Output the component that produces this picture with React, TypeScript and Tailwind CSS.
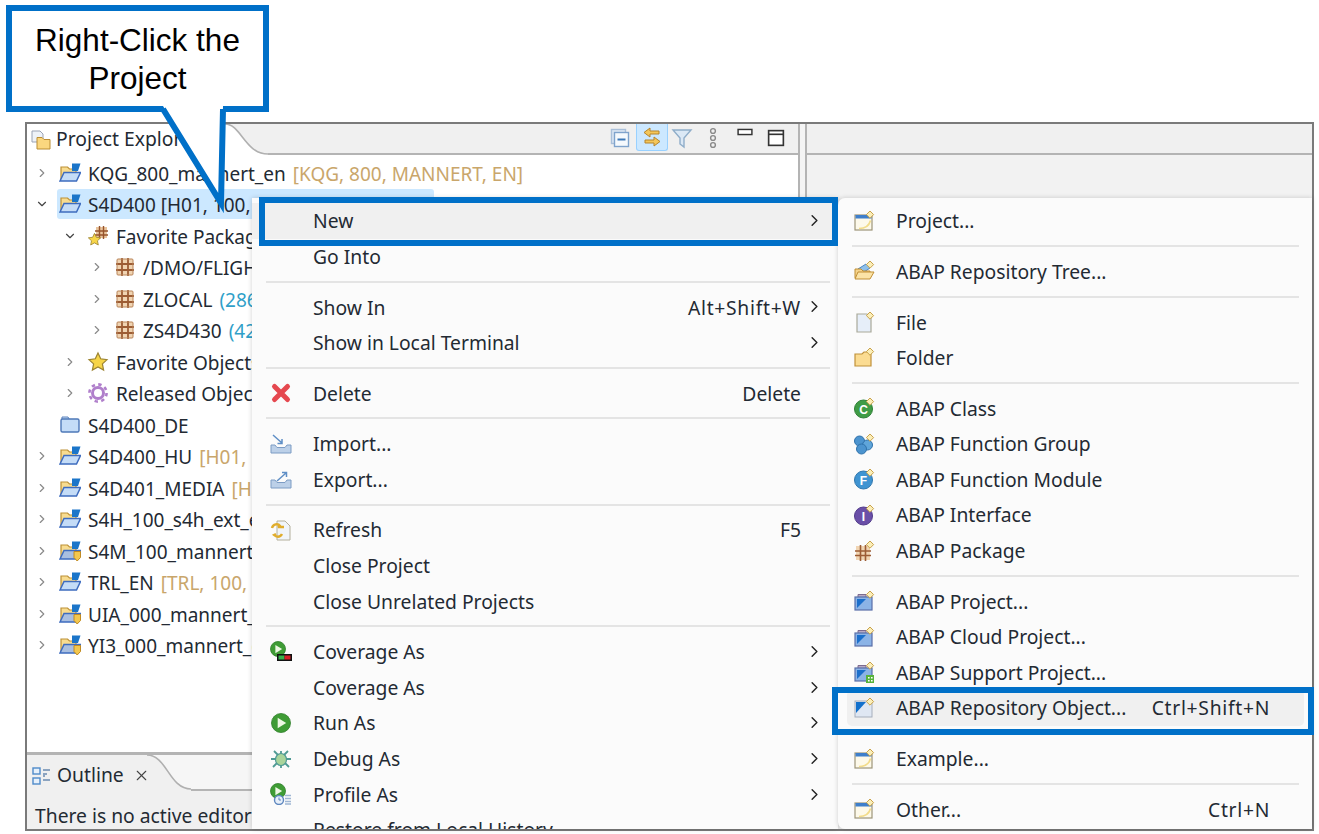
import type { ReactNode } from "react";
import { ChevronDown, ChevronRight, X } from "lucide-react";

function Ico({ children, size = 22 }: { children: ReactNode; size?: number }) {
  return (
    <svg width={size} height={size} viewBox="0 0 22 22" className="shrink-0">
      {children}
    </svg>
  );
}

/* small yellow "new" diamond used by the wizard icons */
const Spark = () => (
  <path d="M17 1l3.6 3.6L17 8.2l-3.6-3.6z" fill="#fbeeb8" stroke="#c9a24a" strokeWidth="1" />
);

const ProjectIcon = ({ locked }: { locked?: boolean }) => (
  <Ico>
    <path d="M2 5h6.5l2 2H17v10H2z" fill="#f8dc90" stroke="#bd9136" strokeWidth="1.2" />
    <path d="M13 1.5h8.5L19 9h-6z" fill="#1b75c9" />
    <path d="M1 19 5 10.5h16.5L17.5 19z" fill={locked ? "#a9bfe0" : "#c4dcf7"} stroke="#3e6cbf" strokeWidth="1.5" />
    {locked && <path d="M15 11.5h6.5v6L18.2 21 15 17.5z" fill="#f3c74e" stroke="#c08a22" />}
  </Ico>
);

const PackageIcon = ({ size = 22 }: { size?: number }) => (
  <Ico size={size}>
    <rect x="3" y="3" width="16" height="16" rx="1" fill="#f0d4b2" />
    <path d="M2 8h18M2 14h18M8 2v18M14 2v18" stroke="#9c5c34" strokeWidth="1.8" fill="none" />
    <rect x="3" y="3" width="16" height="16" rx="1" fill="none" stroke="#b98458" strokeWidth="1" />
  </Ico>
);

const Star = ({ x = 0, y = 0, s = 1 }: { x?: number; y?: number; s?: number }) => (
  <path
    transform={`translate(${x} ${y}) scale(${s})`}
    d="M11 2l2.7 5.8 6.3.8-4.6 4.3 1.2 6.2L11 16l-5.6 3.1 1.2-6.2L2 8.6l6.3-.8z"
    fill="#f7d548"
    stroke="#9c8432"
    strokeWidth="1.2"
  />
);

const FavPackageIcon = () => (
  <Ico>
    <rect x="9" y="2" width="11" height="11" fill="#e9c49c" />
    <path d="M8 6h13M8 10h13M12.5 1v13M16.5 1v13" stroke="#96532c" strokeWidth="1.4" fill="none" />
    <Star x={0} y={7} s={0.68} />
  </Ico>
);

const GearIcon = () => (
  <Ico>
    <circle cx="11" cy="11" r="5.5" fill="none" stroke="#b07fcb" strokeWidth="3" />
    <circle cx="11" cy="11" r="8.6" fill="none" stroke="#b07fcb" strokeWidth="2.6" strokeDasharray="3.4 3.35" />
  </Ico>
);

const ClosedProjectIcon = () => (
  <Ico>
    <path d="M3 5.5V3h6l1.5 2.5z" fill="#c9dcf4" stroke="#5c83bd" />
    <rect x="2" y="5" width="18" height="13" rx="1.5" fill="#c4dcf7" stroke="#4e78b8" strokeWidth="1.4" />
  </Ico>
);

const WindowNew = () => (
  <Ico>
    <rect x="2" y="5" width="17" height="15" fill="#fdf9ea" stroke="#9d9478" strokeWidth="1.2" />
    <rect x="2.5" y="5" width="16" height="3.5" fill="#3f7fcb" />
    <path d="M6 18.5c6 0 10-2 11.5-8" fill="none" stroke="#f2dc8a" strokeWidth="1.6" />
    <Spark />
  </Ico>
);

const RepoTreeNew = () => (
  <Ico>
    <path d="M5 9l8-5 4 4-6 4z" fill="#8fc0ea" stroke="#4d87c2" />
    <path d="M2 18V9h6l2 2h7v7z" fill="#f6d48b" stroke="#bd8c33" />
    <path d="M2 19l3-7h16l-4 7z" fill="#fbe3a6" stroke="#c18f35" />
    <Spark />
  </Ico>
);

const FileNew = () => (
  <Ico>
    <path d="M4 3h10l4 4v14H4z" fill="#e6eef9" stroke="#a9a99a" strokeWidth="1.2" />
    <Spark />
  </Ico>
);

const FolderNew = () => (
  <Ico>
    <path d="M2 19V7h7l2-2h7v14z" fill="#fbdc92" stroke="#c0913a" strokeWidth="1.2" />
    <Spark />
  </Ico>
);

const LetterBall = ({ fill, ring, letter }: { fill: string; ring: string; letter: string }) => (
  <Ico>
    <circle cx="10.5" cy="12" r="9" fill={fill} stroke={ring} strokeWidth="1" />
    <text x="10.5" y="16.5" textAnchor="middle" fontSize="12" fontWeight="700" fill="#fff" fontFamily="Liberation Sans, sans-serif">
      {letter}
    </text>
    <Spark />
  </Ico>
);

const GroupNew = () => (
  <Ico>
    <circle cx="6.5" cy="8" r="5" fill="#4c94cf" stroke="#2f72ab" />
    <circle cx="14.5" cy="12" r="5" fill="#5fa5da" stroke="#2f72ab" />
    <circle cx="8.5" cy="16" r="5" fill="#4c94cf" stroke="#2f72ab" />
    <Spark />
  </Ico>
);

const PackageNew = () => (
  <Ico>
    <rect x="3" y="6" width="14" height="14" fill="#f0d4b2" />
    <path d="M2 11h16M2 15.5h16M7.5 5v16M12.5 5v16" stroke="#9c5c34" strokeWidth="1.6" fill="none" />
    <Spark />
  </Ico>
);

const AbapProjectNew = ({ support }: { support?: boolean }) => (
  <Ico>
    <path d="M5 7V4.5h8V7" fill="#b7a9c4" stroke="#7c6b8f" />
    <rect x="2" y="7" width="17" height="13" fill="#8bb3e6" stroke="#5a6fa8" strokeWidth="1.2" />
    <path d="M4 9h9l-9 9z" fill="#1b6fcc" />
    <Spark />
    {support && <path d="M13 14h8v8h-8z" fill="#57b33c" />}
    {support && <path d="M15 16h1.6v1.6H15zM18 16h1.6v1.6H18zM15 19h1.6v1.6H15zM18 19h1.6v1.6H18z" fill="#fff" />}
  </Ico>
);

const RepoObjectNew = () => (
  <Ico>
    <rect x="2" y="4" width="17" height="16" fill="#dfe7f3" stroke="#a6aebb" />
    <path d="M3 5h10L3 16z" fill="#1270cc" />
    <Spark />
  </Ico>
);

const DeleteIcon = () => (
  <Ico>
    <path d="M4.5 4.5l13 13M17.5 4.5l-13 13" stroke="#e5484f" strokeWidth="5" strokeLinecap="round" />
  </Ico>
);

const TransferIcon = ({ out }: { out?: boolean }) => (
  <Ico>
    <path d="M1 12h4l2 2.5h8l2-2.5h4v8H1z" fill="#bcd0e8" stroke="#7d9cc4" />
    {out ? (
      <path d="M7 13l9-8M12 4.5h4.5V9" fill="none" stroke="#5f8fc6" strokeWidth="1.5" />
    ) : (
      <path d="M3 2l9 8M12 6v4.5H7.5" fill="none" stroke="#5f8fc6" strokeWidth="1.5" />
    )}
  </Ico>
);

const RefreshIcon = () => (
  <Ico>
    <path d="M7 2h8l5 5v14H7z" fill="#f1f5fa" stroke="#b4b09c" />
    <path d="M2 9c1-4 6-5 8-2l-2 1h6" fill="none" stroke="#e0ad2d" strokeWidth="2.4" />
    <path d="M12 15c-2 4-6 3-8 1l2-1" fill="none" stroke="#e0ad2d" strokeWidth="2.4" />
  </Ico>
);

const PlayBall = ({ cx = 11, cy = 11, r = 9.5 }: { cx?: number; cy?: number; r?: number }) => (
  <>
    <circle cx={cx} cy={cy} r={r} fill="#3f9c35" stroke="#2f7f2a" strokeWidth="0.8" />
    <path
      d={`M${cx - r * 0.35} ${cy - r * 0.55}L${cx + r * 0.55} ${cy}L${cx - r * 0.35} ${cy + r * 0.55}z`}
      fill="#eef8e4"
    />
  </>
);

const CoverageIcon = () => (
  <Ico>
    <PlayBall cx={8} cy={8} r={7.5} />
    <rect x="7" y="13" width="15" height="7" fill="#111" />
    <rect x="8.5" y="14.5" width="6" height="4" fill="#37b34a" />
    <rect x="14.5" y="14.5" width="6" height="4" fill="#d61f26" />
  </Ico>
);

const BugIcon = () => (
  <Ico>
    <path d="M11 3v3M4 3l4 4M18 3l-4 4M1 11h5M16 11h5M3 19l4-4M19 19l-4-4M11 17v3" stroke="#4f9a94" strokeWidth="1.8" />
    <ellipse cx="11" cy="11.5" rx="5.5" ry="6" fill="#a9d49b" stroke="#4f9a94" strokeWidth="1.2" />
  </Ico>
);

const ProfileIcon = () => (
  <Ico>
    <PlayBall cx={8} cy={8} r={7.5} />
    <circle cx="9" cy="17" r="4.5" fill="#e8f0fa" stroke="#5e87bf" strokeWidth="1.4" />
    <path d="M9 14.5V17h2" stroke="#5e87bf" fill="none" />
    <path d="M15 12.5h6M15 15.5h6M15 18.5h6M15 21h6" stroke="#9fb6d4" strokeWidth="1.4" />
  </Ico>
);

const ExplorerIcon = () => (
  <Ico>
    <path d="M2 2h8l3 3v8H2z" fill="#eef2f8" stroke="#9aa3b5" />
    <path d="M7 11V8.5h5l2 2h6V20H7z" fill="#fbd77f" stroke="#bb8d33" />
  </Ico>
);

const OutlineIcon = () => (
  <Ico>
    <rect x="2" y="3" width="7" height="6" fill="#e6f0fb" stroke="#4f8ac9" strokeWidth="1.4" />
    <rect x="2" y="13" width="7" height="6" fill="#e6f0fb" stroke="#4f8ac9" strokeWidth="1.4" />
    <path d="M12 5h7M12 9h4M12 15h7M12 11h2" stroke="#6b8bb0" strokeWidth="1.4" />
  </Ico>
);

const ToolbarIcons = () => (
  <div className="ml-auto flex items-start pr-[7px]">
    <div className="flex h-[27px] w-[32px] items-center justify-center">
      <Ico>
        <rect x="2.5" y="2.5" width="14" height="14" fill="#dbe6f3" stroke="#a9bfd9" strokeWidth="1.4" />
        <rect x="5.5" y="5.5" width="14" height="14" fill="#f5f9fd" stroke="#7fa3cc" strokeWidth="1.4" />
        <path d="M8.5 12.5h8" stroke="#3c78b8" strokeWidth="2" />
      </Ico>
    </div>
    <div className="flex h-[27px] w-[32px] items-center justify-center rounded-b-[3px] border border-t-0 border-[#99d1ff] bg-[#cce8ff]">
      <Ico>
        <path d="M9 2L3 6.5 9 11V8h9V5H9z" fill="#f4c659" stroke="#b5842c" />
        <path d="M13 11l6 4.5-6 4.5v-3H4v-3h9z" fill="#f4c659" stroke="#b5842c" />
      </Ico>
    </div>
    <div className="flex h-[27px] w-[28px] items-center justify-center">
      <Ico>
        <path d="M2 3h18l-7 8v9l-4-3v-6z" fill="#dbe8f5" stroke="#8fadc9" strokeWidth="1.4" />
      </Ico>
    </div>
    <div className="flex h-[27px] w-[33px] items-center justify-center">
      <Ico>
        <circle cx="11" cy="4" r="2.4" fill="none" stroke="#8a8a8a" strokeWidth="1.4" />
        <circle cx="11" cy="11" r="2.4" fill="none" stroke="#8a8a8a" strokeWidth="1.4" />
        <circle cx="11" cy="18" r="2.4" fill="none" stroke="#8a8a8a" strokeWidth="1.4" />
      </Ico>
    </div>
    <div className="flex h-[27px] w-[31px] items-start justify-center pt-[4px]">
      <Ico size={16}>
        <rect x="1.5" y="2" width="19" height="7" fill="#fff" stroke="#333" strokeWidth="2" />
      </Ico>
    </div>
    <div className="flex h-[27px] w-[31px] items-center justify-center">
      <Ico size={18}>
        <rect x="2" y="2" width="18" height="18" fill="#fff" stroke="#333" strokeWidth="2" />
        <path d="M2 6.5h18" stroke="#333" strokeWidth="2" />
      </Ico>
    </div>
  </div>
);

type TreeRow = {
  depth: 0 | 1 | 2;
  chevron?: "right" | "down";
  icon: ReactNode;
  name: string;
  deco?: string;
  decoColor?: string;
  selected?: boolean;
};

const depthPad = ["pl-[8px]", "pl-[36px]", "pl-[63px]"];
const tan = "text-[#c9a66b]";
const teal = "text-[#2f9fc9]";

const treeRows: TreeRow[] = [
  { depth: 0, chevron: "right", icon: <ProjectIcon />, name: "KQG_800_mannert_en", deco: "[KQG, 800, MANNERT, EN]", decoColor: tan },
  { depth: 0, chevron: "down", icon: <ProjectIcon />, name: "S4D400 [H01, 100, CB9980000010, EN]", selected: true },
  { depth: 1, chevron: "down", icon: <FavPackageIcon />, name: "Favorite Packages" },
  { depth: 2, chevron: "right", icon: <PackageIcon />, name: "/DMO/FLIGHT" },
  { depth: 2, chevron: "right", icon: <PackageIcon />, name: "ZLOCAL", deco: "(286)", decoColor: teal },
  { depth: 2, chevron: "right", icon: <PackageIcon />, name: "ZS4D430", deco: "(42)", decoColor: teal },
  { depth: 1, chevron: "right", icon: <Ico><Star /></Ico>, name: "Favorite Objects" },
  { depth: 1, chevron: "right", icon: <GearIcon />, name: "Released Objects" },
  { depth: 0, icon: <ClosedProjectIcon />, name: "S4D400_DE" },
  { depth: 0, chevron: "right", icon: <ProjectIcon />, name: "S4D400_HU", deco: "[H01, 100, EN]", decoColor: tan },
  { depth: 0, chevron: "right", icon: <ProjectIcon />, name: "S4D401_MEDIA", deco: "[H01, 100, EN]", decoColor: tan },
  { depth: 0, chevron: "right", icon: <ProjectIcon />, name: "S4H_100_s4h_ext_en", deco: "[S4H, 100]", decoColor: tan },
  { depth: 0, chevron: "right", icon: <ProjectIcon locked />, name: "S4M_100_mannert_en", deco: "[S4M, 100]", decoColor: tan },
  { depth: 0, chevron: "right", icon: <ProjectIcon />, name: "TRL_EN", deco: "[TRL, 100, EN]", decoColor: tan },
  { depth: 0, chevron: "right", icon: <ProjectIcon locked />, name: "UIA_000_mannert_en", deco: "[UIA, 000]", decoColor: tan },
  { depth: 0, chevron: "right", icon: <ProjectIcon locked />, name: "YI3_000_mannert_en", deco: "[YI3, 000]", decoColor: tan },
];

type MenuRow =
  | "sep"
  | { label: string; icon?: ReactNode; shortcut?: string; chord?: boolean; arrow?: boolean; active?: boolean };

const contextMenu: MenuRow[] = [
  { label: "New", arrow: true, active: true },
  { label: "Go Into" },
  "sep",
  { label: "Show In", shortcut: "Alt+Shift+W", chord: true, arrow: true },
  { label: "Show in Local Terminal", arrow: true },
  "sep",
  { label: "Delete", icon: <DeleteIcon />, shortcut: "Delete" },
  "sep",
  { label: "Import...", icon: <TransferIcon /> },
  { label: "Export...", icon: <TransferIcon out /> },
  "sep",
  { label: "Refresh", icon: <RefreshIcon />, shortcut: "F5" },
  { label: "Close Project" },
  { label: "Close Unrelated Projects" },
  "sep",
  { label: "Coverage As", icon: <CoverageIcon />, arrow: true },
  { label: "Coverage As", arrow: true },
  { label: "Run As", icon: <Ico><PlayBall /></Ico>, arrow: true },
  { label: "Debug As", icon: <BugIcon />, arrow: true },
  { label: "Profile As", icon: <ProfileIcon />, arrow: true },
  { label: "Restore from Local History...", arrow: false },
];

const newMenu: MenuRow[] = [
  { label: "Project...", icon: <WindowNew /> },
  "sep",
  { label: "ABAP Repository Tree...", icon: <RepoTreeNew /> },
  "sep",
  { label: "File", icon: <FileNew /> },
  { label: "Folder", icon: <FolderNew /> },
  "sep",
  { label: "ABAP Class", icon: <LetterBall fill="#3f9c45" ring="#2d7f35" letter="C" /> },
  { label: "ABAP Function Group", icon: <GroupNew /> },
  { label: "ABAP Function Module", icon: <LetterBall fill="#3f94d2" ring="#2f76ad" letter="F" /> },
  { label: "ABAP Interface", icon: <LetterBall fill="#6a4fa8" ring="#513a8a" letter="I" /> },
  { label: "ABAP Package", icon: <PackageNew /> },
  "sep",
  { label: "ABAP Project...", icon: <AbapProjectNew /> },
  { label: "ABAP Cloud Project...", icon: <AbapProjectNew /> },
  { label: "ABAP Support Project...", icon: <AbapProjectNew support /> },
  { label: "ABAP Repository Object...", icon: <RepoObjectNew />, shortcut: "Ctrl+Shift+N", chord: true, active: true },
  "sep",
  { label: "Example...", icon: <WindowNew /> },
  "sep",
  { label: "Other...", icon: <WindowNew />, shortcut: "Ctrl+N", chord: true },
];

function Menu({ rows }: { rows: MenuRow[] }) {
  return (
    <>
      {rows.map((row, i) =>
        row === "sep" ? (
          <div key={i} className="flex h-[15px] items-center pl-[14px] pr-[8px]">
            <div className="h-[2px] w-full bg-[#e4e4e4]" />
          </div>
        ) : (
          <div
            key={i}
            className={`flex h-[35.6px] shrink-0 items-center ${row.active ? "bg-[#f0f0f0]" : ""}`}
          >
            <div className="ml-[16px] flex w-[26px] justify-center">{row.icon}</div>
            <span className="ml-[19px] pt-[2px]">{row.label}</span>
            {row.shortcut && (
              <span className={`ml-auto pt-[2px] ${row.chord ? "tracking-[0.7px]" : ""}`}>{row.shortcut}</span>
            )}
            <div className={`${row.shortcut ? "" : "ml-auto"} w-[37px] pl-[4px]`}>
              {row.arrow && <ChevronRight size={19} strokeWidth={1.8} color="#222" />}
            </div>
          </div>
        ),
      )}
    </>
  );
}

function SubMenu({ rows }: { rows: MenuRow[] }) {
  return (
    <>
      {rows.map((row, i) =>
        row === "sep" ? (
          <div key={i} className="flex h-[15px] items-center pl-[14px] pr-[13px]">
            <div className="h-[2px] w-full bg-[#e4e4e4]" />
          </div>
        ) : (
          <div key={i} className="flex h-[35.6px] shrink-0 items-center pl-[9px] pr-[8px]">
            <div
              className={`flex h-full w-full items-center rounded-[5px] ${row.active ? "bg-[#f0f0f0]" : ""}`}
            >
              <div className="ml-[4px] flex w-[26px] justify-center">{row.icon}</div>
              <span className="ml-[19px] pt-[2px]">{row.label}</span>
              {row.shortcut && <span className="ml-auto pr-[34px] pt-[2px] tracking-[0.7px]">{row.shortcut}</span>}
            </div>
          </div>
        ),
      )}
    </>
  );
}

export default function App() {
  return (
    <div
      className="relative h-[834px] w-[1319px] overflow-hidden bg-white pl-[25px] pt-[122px] text-[19.3px] text-[#232a33]"
      style={{ fontFamily: '"Noto Sans", "Open Sans", sans-serif' }}
    >
      {/* workbench window */}
      <div className="flex h-[709px] w-[1289px] border-2 border-[#7a7a7a] bg-[#f2f2f2]">
        <div className="flex w-[773px] flex-col overflow-hidden border-r-2 border-[#b4b4b4] bg-white">
          {/* explorer tab strip */}
          <div className="flex h-[31px] shrink-0 bg-[#f0f0f0]">
            <div className="flex w-[198px] items-center gap-[4px] whitespace-nowrap bg-white pl-[3px]">
              <ExplorerIcon />
              <span>Project Explorer</span>
            </div>
            <svg width="43" height="31" viewBox="0 0 43 31" className="shrink-0">
              <path d="M0 0C16 0 20 30 43 30V31H0z" fill="#fff" />
              <path d="M0 0C16 0 20 30 43 30" fill="none" stroke="#b0b0b0" strokeWidth="1.6" />
            </svg>
            <div className="flex flex-1 border-b-2 border-[#b4b4b4]">
              <ToolbarIcons />
            </div>
          </div>

          {/* tree */}
          <div className="min-h-0 flex-1 overflow-hidden pt-[2px] text-[19px]">
            {treeRows.map((row) => (
              <div key={row.name} className={`flex h-[31.5px] items-center gap-[8px] whitespace-nowrap ${depthPad[row.depth]}`}>
                <div className="flex w-[14px] justify-center">
                  {row.chevron === "right" && <ChevronRight size={16} strokeWidth={2} color="#8a8a8a" />}
                  {row.chevron === "down" && <ChevronDown size={16} strokeWidth={2} color="#444" />}
                </div>
                <div className={`flex h-[30px] items-center gap-[7px] rounded-[3px] pl-[2px] pr-[4px] ${row.selected ? "bg-[#cce8ff]" : ""}`}>
                  {row.icon}
                  <span className="pt-[2px]">{row.name}</span>
                  {row.deco && <span className={`pt-[2px] ${row.decoColor}`}>{row.deco}</span>}
                </div>
              </div>
            ))}
          </div>

          {/* outline view */}
          <div className="h-[3px] shrink-0 bg-[#b4b4b4]" />
          <div className="flex h-[36px] shrink-0 bg-[#f6f6f6]">
            <div className="flex w-[120px] shrink-0 items-center bg-[#f0f0f0] pl-[4px] pt-[5px]">
              <OutlineIcon />
              <span className="ml-[4px]">Outline</span>
              <X size={17} strokeWidth={1.5} color="#444" className="ml-[9px] shrink-0" />
            </div>
            <svg width="44" height="36" viewBox="0 0 44 36" className="shrink-0">
              <path d="M0 0C20 0 22 34 44 34V36H0z" fill="#f0f0f0" />
              <path d="M0 0C20 0 22 34 44 34" fill="none" stroke="#b0b0b0" strokeWidth="1.6" />
            </svg>
            <div className="flex-1 border-b-2 border-[#b4b4b4]" />
          </div>
          <div className="flex h-[38px] shrink-0 items-center whitespace-nowrap bg-[#f0f0f0] pl-[8px] pt-[12px]">
            There is no active editor that provides an outline.
          </div>
        </div>

        {/* editor area */}
        <div className="w-[5px] shrink-0 bg-[#f4f4f4]" />
        <div className="flex-1 border-l-2 border-[#b4b4b4]">
          <div className="h-[31px] border-b-2 border-[#b4b4b4] bg-[#f0f0f0]" />
        </div>
      </div>

      {/* context menu */}
      <div className="absolute left-[252px] top-[198px] h-[631px] w-[586px] overflow-hidden bg-[#fbfbfb] pt-[5px] shadow-[0_0_5px_rgba(0,0,0,0.18)]">
        <Menu rows={contextMenu} />
      </div>

      {/* New submenu */}
      <div className="absolute left-[838px] top-[198px] h-[631px] w-[474px] overflow-hidden rounded-l-[7px] bg-[#fbfbfb] pt-[5px] shadow-[0_0_5px_rgba(0,0,0,0.18)]">
        <SubMenu rows={newMenu} />
      </div>

      {/* callout */}
      <div className="absolute left-[6px] top-[5px] h-[107px] w-[263px] border-[6px] border-[#0070c8] bg-white pt-[10px] text-center text-[31.5px] leading-[38px] text-black [font-family:'Liberation_Sans',sans-serif]">
        Right-Click the Project
      </div>
      <svg width="90" height="115" viewBox="0 0 90 115" className="absolute left-[150px] top-[100px]">
        <path d="M13 6H73L71 100z" fill="#fff" />
        <path d="M13 9L71 103L73 9" fill="none" stroke="#0070c8" strokeWidth="6" strokeMiterlimit="10" />
      </svg>

      {/* highlight boxes */}
      <div className="absolute left-[259px] top-[197px] h-[49px] w-[579px] border-[6px] border-[#0070c8]" />
      <div className="absolute left-[832px] top-[687px] h-[48px] w-[482px] border-[6px] border-[#0070c8]" />
    </div>
  );
}
